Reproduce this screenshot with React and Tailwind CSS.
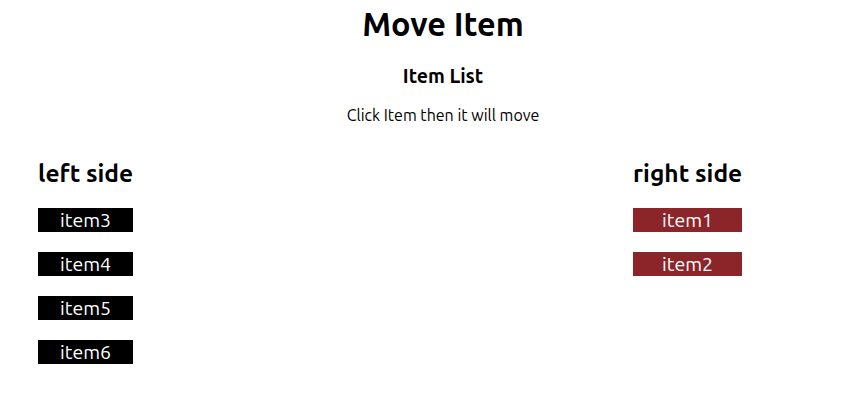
import React, { useState } from 'react';

const App = () => {
  const [left, setLeft] = useState(['item3', 'item4', 'item5', 'item6']);
  const [right, setRight] = useState(['item1', 'item2']);

  const moveToRight = (item) => {
    setLeft(left.filter((i) => i !== item));
    setRight([...right, item]);
  };

  const moveToLeft = (item) => {
    setRight(right.filter((i) => i !== item));
    setLeft([...left, item]);
  };

  return (
    <div className="w-[862px] h-[412px] bg-white text-black font-['Ubuntu','Open_Sans',sans-serif]">
      <div className="flex flex-col items-center pl-6 pt-1">
        <h1 className="text-[32.5px] leading-10 font-bold">Move Item</h1>
        <h3 className="mt-5 text-[19.5px] leading-6 font-bold">Item List</h3>
        <p className="mt-[15px] text-[16px] leading-6">Click Item then it will move</p>
      </div>

      <div className="flex justify-between pl-[38px] pr-[120px] mt-[30px]">
        <div className="flex flex-col w-[95px]">
          <h2 className="text-[24.5px] leading-8 font-bold whitespace-nowrap">left side</h2>
          <div className="flex flex-col gap-5 mt-[19px]">
            {left.map((item) => (
              <button
                key={item}
                onClick={() => moveToRight(item)}
                className="h-6 bg-black text-white text-[19.5px] leading-6 text-center"
              >
                {item}
              </button>
            ))}
          </div>
        </div>

        <div className="flex flex-col w-[109px]">
          <h2 className="text-[24.5px] leading-8 font-bold whitespace-nowrap">right side</h2>
          <div className="flex flex-col gap-5 mt-[19px]">
            {right.map((item) => (
              <button
                key={item}
                onClick={() => moveToLeft(item)}
                className="h-6 bg-[#8b252a] text-white text-[19.5px] leading-6 text-center"
              >
                {item}
              </button>
            ))}
          </div>
        </div>
      </div>
    </div>
  );
};

export default App;
